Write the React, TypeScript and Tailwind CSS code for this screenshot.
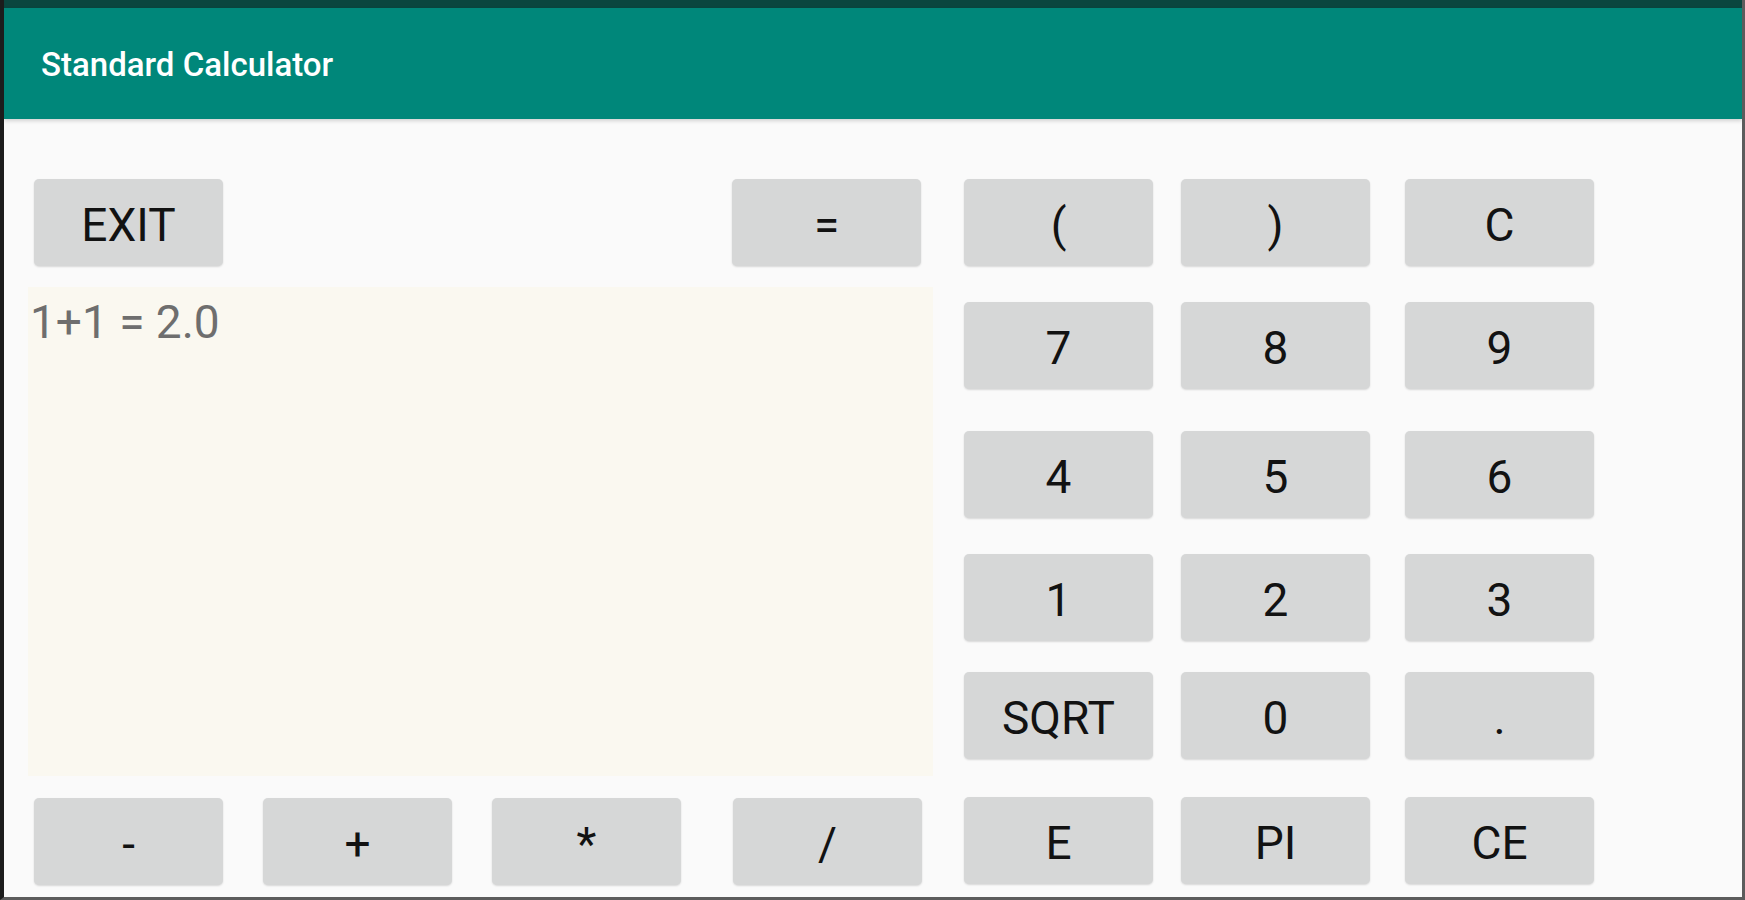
import React from 'react';

const keyClass =
  'flex h-[87px] w-[189px] shrink-0 items-center justify-center rounded-[5px] bg-[#d6d7d7] pt-[4px] text-[46px] leading-none text-[#121212] shadow-[0_1px_2px_rgba(0,0,0,0.14)]';

const keypad: string[][] = [
  ['(', ')', 'C'],
  ['7', '8', '9'],
  ['4', '5', '6'],
  ['1', '2', '3'],
  ['SQRT', '0', '.'],
  ['E', 'PI', 'CE'],
];

// spacing between keypad rows, taken from the screen
const rowGap = ['', 'mt-[36px]', 'mt-[42px]', 'mt-[36px]', 'mt-[31px]', 'mt-[38px]'];

function Key({ label, className = '' }: { label: string; className?: string }) {
  return (
    <button type="button" className={`${keyClass} ${className}`}>
      {label}
    </button>
  );
}

export default function App() {
  return (
    <div className="flex h-[900px] w-[1745px] flex-col overflow-hidden border-b-[3px] border-l-4 border-r-[3px] border-b-[#5c5c5c] border-l-[#1c1c1c] border-r-[#5c5c5c] bg-[#fafafa] font-['Roboto','Liberation_Sans',sans-serif]">
      {/* status bar */}
      <div className="h-[8px] shrink-0 bg-[#0a463f]" />

      {/* toolbar */}
      <header className="relative z-10 flex h-[111px] shrink-0 items-center bg-[#00877a] pl-[37px] pt-[3px] shadow-[0_2px_4px_rgba(0,0,0,0.16)]">
        <h1 className="text-[33px] font-medium text-white">Standard Calculator</h1>
      </header>

      <main className="flex flex-1 pl-[24px] pt-[60px]">
        {/* left side: exit, equals, display, operators */}
        <div className="flex w-[905px] shrink-0 flex-col">
          <div className="flex">
            <Key label="EXIT" className="ml-[6px]" />
            <Key label="=" className="ml-auto mr-[12px]" />
          </div>

          <div className="mt-[21px] h-[489px] bg-[#faf8f0] pl-[2px] pt-[1px]">
            <p className="text-[46px] text-[#6e6e6e]">1+1 = 2.0</p>
          </div>

          <div className="mt-[22px] flex">
            <Key label="-" className="ml-[6px]" />
            <Key label="+" className="ml-[40px]" />
            <Key label="*" className="ml-[40px]" />
            <Key label="/" className="ml-[52px]" />
          </div>
        </div>

        {/* right side: keypad */}
        <div className="ml-[31px] flex flex-col">
          {keypad.map((row, i) => (
            <div key={i} className={`flex ${rowGap[i]}`}>
              <Key label={row[0]} />
              <Key label={row[1]} className="ml-[28px]" />
              <Key label={row[2]} className="ml-[35px]" />
            </div>
          ))}
        </div>
      </main>
    </div>
  );
}
